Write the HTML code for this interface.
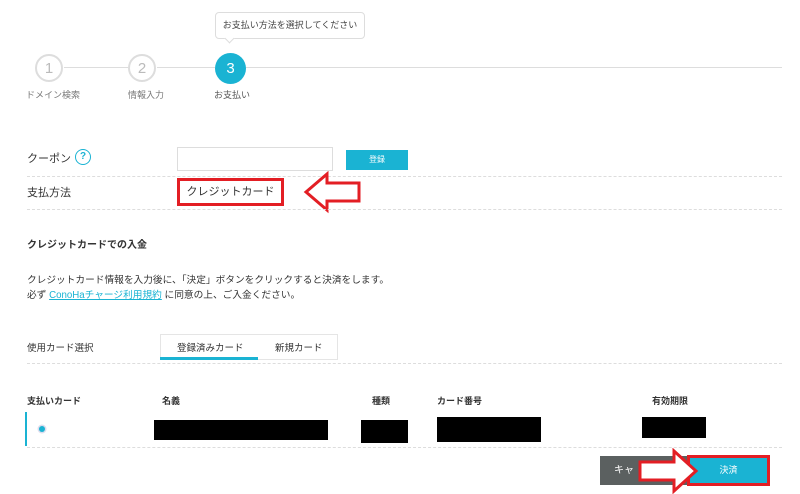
<!DOCTYPE html><html><head><meta charset="utf-8"><style>
body{margin:0;width:800px;height:494px;background:#fff;font-family:"Liberation Sans","Noto Sans CJK JP",sans-serif;color:#333;position:relative;overflow:hidden}
.a{position:absolute;white-space:nowrap}
.c{position:absolute;width:28px;height:28px;border:2px solid #ddd;border-radius:50%;box-sizing:border-box;text-align:center;line-height:25px;color:#bbb;font-size:15px;background:#fff}
.d{position:absolute;left:27px;width:755px;border-top:1px dashed #ddd;height:0}
.s{font-size:9px;color:#555}
.bk{position:absolute;background:#000}
</style></head><body>
<div class="a" style="left:215px;top:12px;width:150px;height:27px;border:1px solid #ddd;border-radius:4px;box-sizing:border-box;font-size:9px;text-align:center;line-height:25px;color:#444">お支払い方法を選択してください</div>
<div class="a" style="left:226px;top:35px;width:6px;height:6px;background:#fff;border-right:1px solid #ddd;border-bottom:1px solid #ddd;transform:rotate(45deg)"></div>
<div class="a" style="left:64px;top:67px;width:64px;border-top:1px solid #ddd"></div>
<div class="a" style="left:157px;top:67px;width:58px;border-top:1px solid #ddd"></div>
<div class="a" style="left:244px;top:67px;width:538px;border-top:1px solid #ddd"></div>
<div class="c" style="left:35px;top:54px">1</div>
<div class="c" style="left:128px;top:54px">2</div>
<div class="c" style="left:215px;top:53px;width:31px;height:31px;border:none;background:#1ab3d3;color:#fff;line-height:31px">3</div>
<div class="a s" style="left:26px;top:88px;color:#777">ドメイン検索</div>
<div class="a s" style="left:128px;top:88px;color:#777">情報入力</div>
<div class="a s" style="left:214px;top:88px">お支払い</div>
<div class="a" style="left:27px;top:150px;font-size:11px">クーポン</div>
<div class="a" style="left:75px;top:149px;width:14px;height:14px;border:1.5px solid #1ab3d3;border-radius:50%;color:#1ab3d3;font-size:10px;font-weight:bold;text-align:center;line-height:14px">?</div>
<div class="a" style="left:177px;top:147px;width:156px;height:24px;border:1px solid #ddd;box-sizing:border-box"></div>
<div class="a" style="left:346px;top:150px;width:62px;height:20px;background:#1ab3d3;color:#fff;font-size:8px;text-align:center;line-height:20px">登録</div>
<div class="d" style="top:176px"></div>
<div class="a" style="left:27px;top:184px;font-size:11px">支払方法</div>
<div class="a" style="left:177px;top:178px;width:107px;height:28px;border:3px solid #e31e24;box-sizing:border-box;font-size:11px;text-align:center;line-height:22px">クレジットカード</div>
<svg class="a" style="left:303px;top:171px" width="60" height="43"><path d="M3 21 L24 3 L24 12 L56 12 L56 30 L24 30 L24 39 Z" fill="#fff" stroke="#e31e24" stroke-width="3"/></svg>
<div class="d" style="top:209px"></div>
<div class="a" style="left:27px;top:236px;font-size:10px;font-weight:bold">クレジットカードでの入金</div>
<div class="a" style="left:27px;top:272px;font-size:9.7px">クレジットカード情報を入力後に、「決定」ボタンをクリックすると決済をします。</div>
<div class="a" style="left:27px;top:287px;font-size:9.7px">必ず <span style="color:#1ab3d3;text-decoration:underline">ConoHaチャージ利用規約</span> に同意の上、ご入金ください。</div>
<div class="a" style="left:27px;top:340px;font-size:9.5px">使用カード選択</div>
<div class="a" style="left:160px;top:334px;width:178px;height:26px;border:1px solid #e5e5e5;box-sizing:border-box"></div>
<div class="a" style="left:160px;top:357px;width:98px;height:3px;background:#1ab3d3"></div>
<div class="a" style="left:177px;top:340px;font-size:9.5px">登録済みカード</div>
<div class="a" style="left:275px;top:340px;font-size:9.5px">新規カード</div>
<div class="d" style="top:363px"></div>
<div class="a" style="left:27px;top:394px;font-size:9px;font-weight:bold">支払いカード</div>
<div class="a" style="left:162px;top:394px;font-size:9px;font-weight:bold">名義</div>
<div class="a" style="left:372px;top:394px;font-size:9px;font-weight:bold">種類</div>
<div class="a" style="left:437px;top:394px;font-size:9px;font-weight:bold">カード番号</div>
<div class="a" style="left:652px;top:394px;font-size:9px;font-weight:bold">有効期限</div>
<div class="a" style="left:25px;top:412px;width:2px;height:34px;background:#1ab3d3"></div>
<div class="a" style="left:39px;top:426px;width:6px;height:6px;border-radius:50%;background:#1ab3d3;box-shadow:0 0 0 1.5px #dde"></div>
<div class="bk" style="left:154px;top:420px;width:174px;height:20px"></div>
<div class="bk" style="left:361px;top:420px;width:47px;height:23px"></div>
<div class="bk" style="left:437px;top:417px;width:104px;height:25px"></div>
<div class="bk" style="left:642px;top:417px;width:64px;height:21px"></div>
<div class="d" style="top:447px"></div>
<div class="a" style="left:600px;top:456px;width:88px;height:29px;background:#5b6060;color:#fff;font-size:10px;line-height:29px;padding-left:14px;box-sizing:border-box">キャ</div>
<div class="a" style="left:687px;top:455px;width:83px;height:31px;border:3px solid #e31e24;background:#1ab3d3;box-sizing:border-box;color:#fff;font-size:9px;text-align:center;line-height:25px">決済</div>
<svg class="a" style="left:636px;top:448px" width="66" height="46"><path d="M4 14 L38 14 L38 3 L60 23 L38 43 L38 32 L4 32 Z" fill="#fff" stroke="#e31e24" stroke-width="3"/></svg>
</body></html>
